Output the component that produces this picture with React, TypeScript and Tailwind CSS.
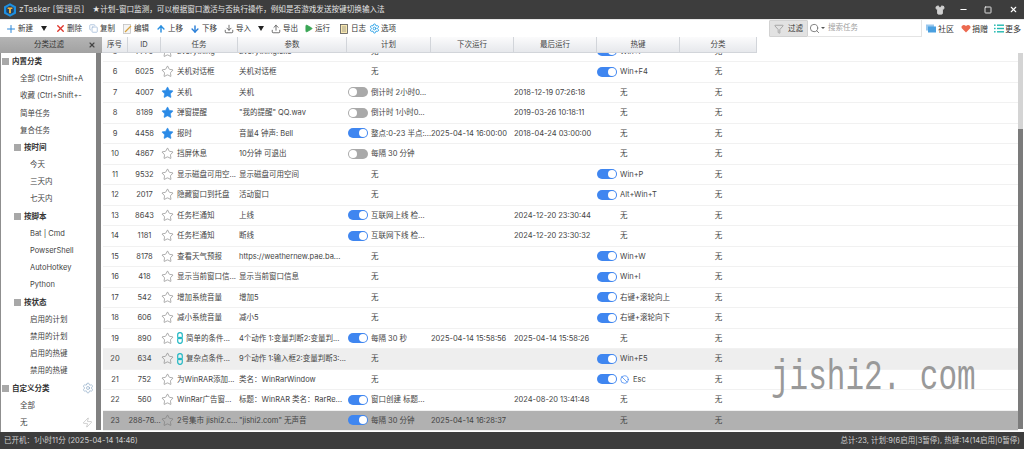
import React from "react";
import { Star, Settings, Zap, Plus, X, Copy, ArrowUp, ArrowDown, Upload, Download, Play, Search, Shirt, Minus, Square, Ban, Filter } from "lucide-react";

type Row = {
  no: string;
  id: string;
  task: string;
  fav?: boolean;
  link?: boolean;
  param: string;
  planOn?: boolean;
  plan: string;
  next?: string;
  last?: string;
  keyOn?: boolean;
  key: string;
  ban?: boolean;
  bg?: string;
};

const rows: Row[] = [
  { no: "6", id: "6025", task: "关机对话框", param: "关机对话框", plan: "无", keyOn: true, key: "Win+F4" },
  { no: "7", id: "4007", task: "关机", fav: true, param: "关机", planOn: false, plan: "倒计时 2小时0...", last: "2018-12-19 07:26:18", key: "无" },
  { no: "8", id: "8189", task: "弹窗提醒", fav: true, param: "\"我的提醒\" QQ.wav", planOn: false, plan: "倒计时 1小时0...", last: "2019-03-26 10:18:11", key: "无" },
  { no: "9", id: "4458", task: "报时", fav: true, param: "音量4 钟声: Bell", planOn: true, plan: "整点:0-23 半点:...", next: "2025-04-14 16:00:00", last: "2018-04-24 03:00:00", key: "无" },
  { no: "10", id: "4867", task: "挡屏休息", param: "10分钟 可退出", planOn: false, plan: "每隔 30 分钟", key: "无" },
  { no: "11", id: "9532", task: "显示磁盘可用空...", param: "显示磁盘可用空间", plan: "无", keyOn: true, key: "Win+P" },
  { no: "12", id: "2017", task: "隐藏窗口到托盘", param: "活动窗口", plan: "无", keyOn: true, key: "Alt+Win+T" },
  { no: "13", id: "8643", task: "任务栏通知", param: "上线", planOn: true, plan: "互联网上线 检...", last: "2024-12-20 23:30:44", key: "无" },
  { no: "14", id: "1181", task: "任务栏通知", param: "断线", planOn: true, plan: "互联网下线 检...", last: "2024-12-20 23:30:32", key: "无" },
  { no: "15", id: "8178", task: "查看天气预报", param: "https://weathernew.pae.ba...", plan: "无", keyOn: true, key: "Win+W" },
  { no: "16", id: "418", task: "显示当前窗口信...", param: "显示当前窗口信息", plan: "无", keyOn: true, key: "Win+I" },
  { no: "17", id: "542", task: "增加系统音量", param: "增加5", plan: "无", keyOn: true, key: "右键+滚轮向上" },
  { no: "18", id: "606", task: "减小系统音量", param: "减小5", plan: "无", keyOn: true, key: "右键+滚轮向下" },
  { no: "19", id: "890", task: "简单的条件...", link: true, param: "4个动作 1:变量判断2:变量判...", planOn: true, plan: "每隔 30 秒", next: "2025-04-14 15:58:56", last: "2025-04-14 15:58:26", key: "无" },
  { no: "20", id: "634", task: "复杂点条件...", link: true, param: "9个动作 1:输入框2:变量判断3:...", plan: "无", keyOn: true, key: "Win+F5", bg: "bg-[#eeeeee]" },
  { no: "21", id: "752", task: "为WinRAR添加...", param: "类名：WinRarWindow", plan: "无", keyOn: true, key: "Esc", ban: true },
  { no: "22", id: "560", task: "WinRar广告窗...", param: "标题：WinRAR 类名：RarRe...", planOn: true, plan: "窗口创建 标题...", last: "2024-08-20 13:41:48", key: "无" },
  { no: "23", id: "288-76...", task: "2号集市 jishi2.c...", param: "\"jishi2.com\" 无声音", planOn: true, plan: "每隔 30 分钟", next: "2025-04-14 16:28:37", key: "无", bg: "bg-[#b1b1b1]" },
];

const sideItems: { label: string; level: number; head?: boolean }[] = [
  { label: "内置分类", level: 1, head: true },
  { label: "全部 (Ctrl+Shift+A", level: 1 },
  { label: "收藏 (Ctrl+Shift+-", level: 1 },
  { label: "简单任务", level: 1 },
  { label: "复合任务", level: 1 },
  { label: "按时间", level: 2, head: true },
  { label: "今天", level: 2 },
  { label: "三天内", level: 2 },
  { label: "七天内", level: 2 },
  { label: "按脚本", level: 2, head: true },
  { label: "Bat | Cmd", level: 2 },
  { label: "PowserShell", level: 2 },
  { label: "AutoHotkey", level: 2 },
  { label: "Python", level: 2 },
  { label: "按状态", level: 2, head: true },
  { label: "启用的计划", level: 2 },
  { label: "禁用的计划", level: 2 },
  { label: "启用的热键", level: 2 },
  { label: "禁用的热键", level: 2 },
  { label: "自定义分类", level: 1, head: true },
  { label: "全部", level: 1 },
  { label: "无", level: 1 },
];

const Toggle = ({ on }: { on: boolean }) => (
  <span className={`flex h-[10px] w-[20px] shrink-0 items-center rounded-full ${on ? "justify-end bg-[#3f86f0]" : "justify-start bg-[#a9a9a9]"}`}>
    <span className={`h-[8px] w-[8px] rounded-full bg-white ${on ? "mr-[1px]" : "ml-[1px]"}`} />
  </span>
);

const Chain = () => (
  <svg width="6" height="12" viewBox="0 0 6 12" className="mr-[3px] shrink-0" fill="none" stroke="#22b8c4" strokeWidth="1.2">
    <rect x="0.7" y="0.7" width="4.6" height="6" rx="2.2" />
    <rect x="0.7" y="5.3" width="4.6" height="6" rx="2.2" />
  </svg>
);

const Cols = "grid grid-cols-[26px_33px_77px_109px_84px_83px_83px_83px_77px]";

const TableRow = ({ r }: { r: Row }) => (
  <div className={`ml-px h-[20.5px] border-b border-[#f1f1f1] ${r.bg ?? ""}`}>
    <div className={`${Cols} -ml-px h-full items-center whitespace-nowrap`}>
      <span className="text-center">{r.no}</span>
      <span className="overflow-hidden text-center">{r.id}</span>
      <span className="flex items-center overflow-hidden">
        <Star size={13} strokeWidth={1.1} className={`mr-[3px] shrink-0 ${r.fav ? "fill-[#2b8ae6] text-[#2b8ae6]" : "text-[#777777]"}`} />
        {r.link && <Chain />}
        {r.task}
      </span>
      <span className="overflow-hidden pl-[1px]">{r.param}</span>
      <span className="flex items-center overflow-hidden pl-[1px]">
        {r.planOn !== undefined ? <Toggle on={r.planOn} /> : <span className="w-[20px] shrink-0" />}
        <span className="ml-[3px]">{r.plan}</span>
      </span>
      <span>{r.next}</span>
      <span>{r.last}</span>
      <span className="flex items-center">
        {r.keyOn ? <Toggle on /> : <span className="w-[20px] shrink-0" />}
        {r.ban && <Ban size={9} className="ml-[3px] text-[#3f86f0]" />}
        <span className={r.ban ? "ml-[4px]" : "ml-[3px]"}>{r.key}</span>
      </span>
      <span className="text-center">无</span>
    </div>
  </div>
);

const Tool = ({ icon, label, className }: { icon: React.ReactNode; label: string; className: string }) => (
  <span className={`flex items-center ${className}`}>
    <span className="flex w-[10px] justify-center">{icon}</span>
    <span className="ml-[2px]">{label}</span>
  </span>
);

const Caret = ({ className }: { className: string }) => (
  <span className={`h-0 w-0 border-x-[3.5px] border-t-[5px] border-x-transparent border-t-[#222222] ${className}`} />
);

const headers = ["序号", "ID", "任务", "参数", "计划", "下次运行", "最后运行", "热键", "分类"];

export default function App() {
  return (
    <div className="relative flex h-[449px] w-[1024px] flex-col overflow-hidden bg-white text-[7.5px] text-[#444444] [font-family:'Inter','Noto_Sans_CJK_SC',sans-serif]">
      {/* title bar */}
      <div className="flex h-[19px] shrink-0 items-center bg-[#3d3d3d] text-[#d8d8d8]">
        <svg width="14" height="14" viewBox="0 0 14 14" className="ml-[3px]">
          <path d="M7 0.2 L13 3.6 V10.4 L7 13.8 L1 10.4 V3.6 Z" fill="#1d8fe0" />
          <path d="M7 2.6 L10.8 4.8 V9.2 L7 11.4 L3.2 9.2 V4.8 Z" fill="#26415e" />
          <path d="M4.6 4.4 H9.4 V6 H7.9 V10.2 H6.1 V6 H4.6 Z" fill="#f5b53a" />
        </svg>
        <span className="ml-[2px] text-[8.5px]">zTasker [管理员]</span>
        <span className="ml-[8px] text-[7.6px] text-[#e6e6e6]">★计划-窗口监测，可以根据窗口激活与否执行操作，例如是否游戏发送按键切换输入法</span>
        <span className="ml-auto flex items-center">
          <Shirt size={10} className="fill-[#d0d0d0] text-[#d0d0d0]" />
          <Minus size={9} strokeWidth={3} className="ml-[14px] text-white" />
          <Square size={8} strokeWidth={2.5} className="ml-[16px] text-white" />
          <X size={9} strokeWidth={3} className="mr-[6px] ml-[17px] text-white" />
        </span>
      </div>

      {/* toolbar */}
      <div className="flex h-[18px] shrink-0 items-center border-t border-[#e8e8e8] text-[#333333]">
        <Tool className="ml-[6px]" icon={<Plus size={12} strokeWidth={2} className="shrink-0 text-[#2a86d8]" />} label="新建" />
        <Caret className="ml-[8px]" />
        <Tool className="ml-[8px]" icon={<X size={11} strokeWidth={3} className="shrink-0 text-[#e0352b]" />} label="删除" />
        <Tool className="ml-[6px]" icon={<Copy size={9} className="text-[#9cb6d6]" />} label="复制" />
        <Tool className="ml-[7px]" icon={
          <svg width="9" height="10" viewBox="0 0 9 10">
            <rect x="0.5" y="0.5" width="7" height="9" fill="#f4f4f4" stroke="#bbbbbb" strokeWidth="0.7" />
            <path d="M2 8 L8 2" stroke="#d6a23c" strokeWidth="1.2" />
          </svg>
        } label="编辑" />
        <Tool className="ml-[7px]" icon={<ArrowUp size={10} strokeWidth={3.5} className="text-[#2a8fe0]" />} label="上移" />
        <Tool className="ml-[7px]" icon={<ArrowDown size={10} strokeWidth={3.5} className="text-[#2a7fd8]" />} label="下移" />
        <Tool className="ml-[7px]" icon={<Download size={10} className="text-[#555555]" />} label="导入" />
        <Caret className="ml-[7px]" />
        <Tool className="ml-[7px]" icon={<Upload size={10} className="text-[#555555]" />} label="导出" />
        <Tool className="ml-[5px]" icon={<Play size={9} className="fill-[#3aa655] text-[#3aa655]" />} label="运行" />
        <Tool className="ml-[9px]" icon={
          <svg width="8" height="10" viewBox="0 0 8 10">
            <rect x="0.5" y="0.5" width="7" height="9" fill="#f7e7b0" stroke="#555555" strokeWidth="0.8" />
            <path d="M2 3 H6 M2 5 H6 M2 7 H6" stroke="#777777" strokeWidth="0.6" />
          </svg>
        } label="日志" />
        <Tool className="ml-[3px]" icon={<Settings size={11} className="shrink-0 text-[#27a0e6]" />} label="选项" />

        <span className="ml-auto flex h-full items-center text-[8px]">
          <span className="flex h-[17px] w-[39px] items-center justify-center gap-[4px] rounded-[1px] border border-[#d2d2d2] bg-[#e2e2e2] text-[7.5px]">
            <Filter size={10} className="text-[#9a9a9a]" />
            过滤
          </span>
          <span className="flex h-[17px] w-[114px] items-center border-r border-b border-[#e4e4e4] pl-[1px] text-[7.5px] text-[#a0a0a0]">
            <Search size={11} className="text-[#777777]" />
            <span className="mr-[3px] ml-[1px] h-0 w-0 border-x-[2px] border-t-[2px] border-x-transparent border-t-[#555555]" />
            搜索任务
          </span>
          <span className="ml-[4px] flex items-center">
            <svg width="10" height="10" viewBox="0 0 10 10">
              <rect x="0" y="0.5" width="8" height="6" fill="#9ac8ee" />
              <rect x="2" y="2.5" width="8" height="6" fill="#4aa0e0" />
            </svg>
            <span className="ml-[2px]">社区</span>
          </span>
          <span className="ml-[7px] flex items-center">
            <svg width="10" height="9" viewBox="0 0 10 9">
              <path d="M5 8.5 L0.8 4.2 C-0.6 2 2.8 -0.6 5 2 C7.2 -0.6 10.6 2 9.2 4.2 Z" fill="#ec6a50" />
            </svg>
            <span className="ml-[1px]">捐赠</span>
          </span>
          <span className="mr-[3px] ml-[6px] flex items-center">
            <svg width="10" height="9" viewBox="0 0 10 9" fill="#22b8b0">
              <rect x="0" y="0.5" width="1.6" height="1.4" />
              <rect x="3" y="0.5" width="7" height="1.4" />
              <rect x="0" y="3.8" width="1.6" height="1.4" />
              <rect x="3" y="3.8" width="7" height="1.4" />
              <rect x="0" y="7.1" width="1.6" height="1.4" />
              <rect x="3" y="7.1" width="7" height="1.4" />
            </svg>
            <span className="ml-[1px]">更多</span>
          </span>
        </span>
      </div>

      {/* main */}
      <div className="flex min-h-0 flex-1">
        {/* filter sidebar */}
        <div className="flex w-[102px] shrink-0 flex-col">
          <div className="flex h-[16px] shrink-0 items-center bg-gradient-to-b from-[#b4b4b4] to-[#a2a2a2] pr-[6px] text-[#333333]">
            <span className="flex-1 pl-[10px] text-center">分类过滤</span>
            <X size={8} strokeWidth={3.5} className="text-[#444444]" />
          </div>
          <div className="flex min-h-0 flex-1">
            <div className="w-[96px] border-l border-[#8f8f8f]">
              {sideItems.map((s, i) => (
                <div
                  key={i}
                  className={`flex h-[17.2px] items-center overflow-hidden whitespace-nowrap ${s.head ? "font-bold text-[#333333]" : ""} ${s.head ? (s.level === 1 ? "pl-[1px]" : "pl-[13px]") : s.level === 1 ? "pl-[19px]" : "pl-[29px]"}`}
                >
                  {s.head && <span className="mr-[3px] h-[7px] w-[7px] shrink-0 bg-[#a8a8a8]" />}
                  <span className={s.head ? "" : "w-[66px] overflow-hidden"}>{s.label}</span>
                  {s.label === "自定义分类" && <Settings size={12} strokeWidth={1.2} className="mr-[2px] ml-auto text-[#7f9fc0]" />}
                  {s.label === "无" && <Zap size={11} strokeWidth={1} className="mr-[3px] ml-auto shrink-0 text-[#9a9a9a]" />}
                </div>
              ))}
            </div>
            <div className="mb-[2px] w-[5px] bg-[#818181]" />
          </div>
        </div>

        {/* table */}
        <div className="flex min-w-0 flex-1 flex-col">
          <div className={`${Cols} h-[16px] shrink-0 self-start bg-gradient-to-b from-[#fbfbfc] to-[#e5e7eb]`}>
            {headers.map((h) => (
              <span key={h} className="flex items-center justify-center border-r border-b border-[#d2d5da]">{h}</span>
            ))}
          </div>
          <div className="flex min-h-0 flex-1">
            <div className="min-w-0 flex-1 overflow-hidden">
              <div className="ml-px h-[9px] overflow-hidden border-b border-[#f1f1f1]">
                <div className={`${Cols} -mt-[12px] -ml-px h-[20.5px] items-center whitespace-nowrap`}>
                  <span className="text-center">5</span>
                  <span className="text-center">7770</span>
                  <span className="flex items-center">
                    <Star size={13} strokeWidth={1.1} className="mr-[3px] text-[#777777]" />
                    Everything
                  </span>
                  <span className="pl-[1px]">Everything.exe</span>
                  <span className="pl-[24px]">无</span>
                  <span />
                  <span />
                  <span className="flex items-center">
                    <Toggle on />
                    <span className="ml-[3px]">Win+F</span>
                  </span>
                  <span className="text-center">无</span>
                </div>
              </div>
              {rows.map((r) => (
                <TableRow key={r.no} r={r} />
              ))}
            </div>
            <div className="mr-px mb-[3px] flex w-[5px] shrink-0 flex-col">
              <div className="h-[76px] bg-[#d4d4d4]" />
              <div className="flex-1 bg-[#7b7b7b]" />
            </div>
          </div>
        </div>
      </div>

      {/* status bar */}
      <div className="flex h-[17px] shrink-0 items-center justify-between bg-[#3d3d3d] px-[4px] text-[#d0d0d0]">
        <span>已开机：1小时11分 (2025-04-14 14:46)</span>
        <span>总计:23, 计划:9(6启用|3暂停), 热键:14(14启用|0暂停)</span>
      </div>

      {/* watermark */}
      <span className="pointer-events-none absolute top-[358px] left-[771px] scale-y-[1.35] text-[31px] leading-[40px] whitespace-pre text-[#999999] [font-family:'Liberation_Mono',monospace]">jishi2. com</span>
    </div>
  );
}
